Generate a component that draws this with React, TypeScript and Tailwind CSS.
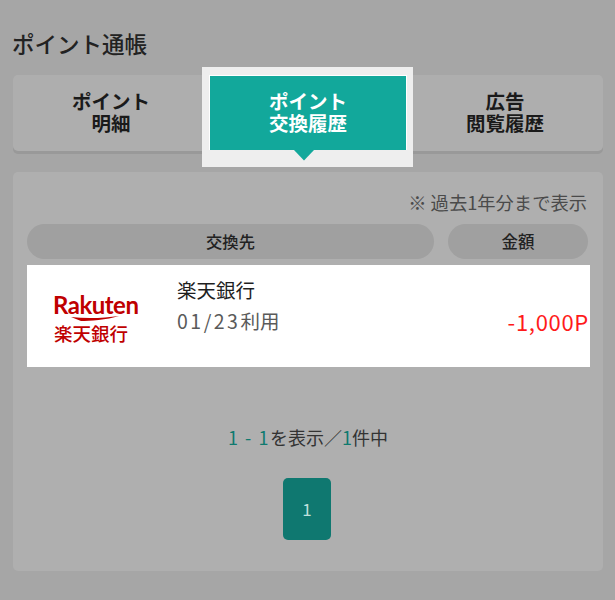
export default function App() {
  const font = { fontFamily: '"Noto Sans CJK JP", "Noto Sans", sans-serif' };
  return (
    <div style={font} className="w-[615px] h-[600px] overflow-hidden bg-[#a6a6a6] px-[13px] text-[#1a1a1a]">
      <h1 className="pt-[28px] h-[75px] text-[22.5px] leading-[30px] font-medium -ml-[1px] text-[#222]">ポイント通帳</h1>
      <div className="flex h-[76px] w-[590px] rounded-[5px] bg-[#aeaeae] shadow-[0_3px_0_#999]">
        <div className="w-[196px] pb-[2px] flex flex-col items-center justify-center text-[19.5px] leading-[22px] font-bold">
          <span>ポイント</span>
          <span>明細</span>
        </div>
        <div className="relative w-[198px] pb-[2px] flex flex-col items-center justify-center text-[19.5px] leading-[22px] font-bold text-white">
          <div className="absolute left-[-7px] right-[-6px] top-[-8px] bottom-[-16px] bg-[#eeeeee]" />
          <div className="absolute inset-x-0 top-0 bottom-[1px] bg-[#12a89b] border-x border-t border-white" />
          <svg className="absolute left-[85px] top-[75px]" width="20" height="11" viewBox="0 0 20 11">
            <path d="M0 0 L10 10.5 L20 0 Z" fill="#12a89b" />
          </svg>
          <span className="relative">ポイント</span>
          <span className="relative">交換履歴</span>
        </div>
        <div className="flex-1 pb-[2px] flex flex-col items-center justify-center text-[19.5px] leading-[22px] font-bold">
          <span>広告</span>
          <span>閲覧履歴</span>
        </div>
      </div>
      <div className="mt-[21px] h-[399px] w-[590px] rounded-[5px] bg-[#afafaf] pt-[18px]">
        <div className="pr-[16px] text-right text-[18.3px] leading-[24px] text-[#4a4a4a]">※ 過去1年分まで表示</div>
        <div className="mt-[10px] flex gap-[14px] pl-[14px] pr-[15px]">
          <div className="flex-1 h-[35px] rounded-full bg-[#a0a0a0] flex items-center justify-center text-[16.3px] font-medium text-[#222]">交換先</div>
          <div className="w-[140px] h-[35px] rounded-full bg-[#a0a0a0] flex items-center justify-center text-[16.5px] font-medium text-[#222]">金額</div>
        </div>
        <div className="mt-[6px] ml-[14px] mr-[13px] h-[102px] bg-white flex">
          <div className="w-[150px] flex flex-col items-start pt-[28px] pl-[26px] text-[#bf0000]">
            <div style={{ fontFamily: 'Lato, sans-serif' }} className="text-[24px] leading-[24px] font-bold tracking-[-0.5px]">Rakuten</div>
            <svg className="-mt-[1px] ml-[18px]" width="48" height="5" viewBox="0 0 48 5">
              <path d="M0 1 C16 3 34 2 48 0 C36 4 18 5 10 5 Z" fill="#bf0000" />
            </svg>
            <div className="mt-[2px] ml-[1px] text-[18.5px] leading-[20px] font-medium">楽天銀行</div>
          </div>
          <div className="flex-1 pt-[12px]">
            <div className="text-[19.5px] leading-[26px] text-[#1f1f1f]">楽天銀行</div>
            <div className="mt-[5px] text-[19.5px] leading-[26px] text-[#5a5a5a]"><span className="tracking-[2.5px]">01/23</span>利用</div>
          </div>
          <div className="self-end pb-[33px] mr-[1px] text-[22px] leading-[26px] tracking-[0.7px] text-[#ff1a1a]">-1,000P</div>
        </div>
        <div className="mt-[58px] text-center text-[18px] leading-[24px] text-[#333]">
          <span className="text-[#0f7a6f] tracking-[1.5px]">1 - 1</span>を表示／<span className="text-[#0f7a6f]">1</span>件中
        </div>
        <div className="mt-[29px] pr-[2px] flex justify-center">
          <div className="w-[48px] h-[62px] rounded-[5px] bg-[#0f7870] flex items-center justify-center text-[17px] text-[#bfe0dc]">1</div>
        </div>
      </div>
    </div>
  );
}
